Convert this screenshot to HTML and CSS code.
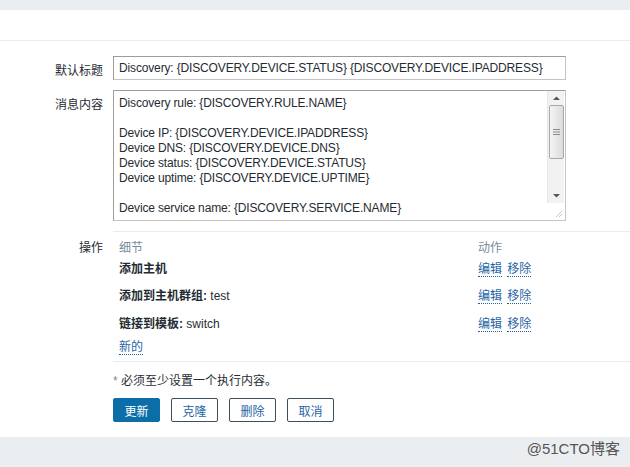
FILE: index.html
```html
<!DOCTYPE html>
<html lang="zh-CN">
<head>
    <meta charset="UTF-8">
    <title>Discovery 操作</title>
    <link rel="stylesheet" href="styles.css">
</head>
<body>

    <div class="topstrip"></div>

    <div class="panel">
        <div class="panel-head"></div>

        <form class="form">
            <div class="row">
                <label class="label" for="subject">默认标题</label>
                <div class="field">
                    <div class="input" id="subject">Discovery: {DISCOVERY.DEVICE.STATUS} {DISCOVERY.DEVICE.IPADDRESS}</div>
                </div>
            </div>

            <div class="row">
                <label class="label">消息内容</label>
                <div class="field">
                    <div class="textarea">
                        <div class="textarea-text">
                            <div>Discovery rule: {DISCOVERY.RULE.NAME}</div>
                            <div>&nbsp;</div>
                            <div>Device IP: {DISCOVERY.DEVICE.IPADDRESS}</div>
                            <div>Device DNS: {DISCOVERY.DEVICE.DNS}</div>
                            <div>Device status: {DISCOVERY.DEVICE.STATUS}</div>
                            <div>Device uptime: {DISCOVERY.DEVICE.UPTIME}</div>
                            <div>&nbsp;</div>
                            <div>Device service name: {DISCOVERY.SERVICE.NAME}</div>
                        </div>
                        <div class="scrollbar">
                            <svg class="arrow" width="9" height="6" viewBox="0 0 9 6"><path d="M1 5 L4.5 1.5 L8 5 Z" fill="#555"/></svg>
                            <div class="thumb">
                                <svg width="7" height="8" viewBox="0 0 7 8"><path d="M0 1.5 H7 M0 4 H7 M0 6.5 H7" stroke="#8a8a8a" stroke-width="1"/></svg>
                            </div>
                            <div class="track"></div>
                            <svg class="arrow" width="9" height="6" viewBox="0 0 9 6"><path d="M1 1 L4.5 4.5 L8 1 Z" fill="#555"/></svg>
                        </div>
                        <svg class="grip" width="8" height="8" viewBox="0 0 8 8"><path d="M7 1 L1 7 M7 4 L4 7" stroke="#c8c8c8" stroke-width="1"/></svg>
                    </div>
                </div>
            </div>

            <div class="row row-ops">
                <label class="label">操作</label>
                <div class="ops">
                    <div class="ops-row ops-head">
                        <span class="ops-detail">细节</span>
                        <span class="ops-action">动作</span>
                    </div>
                    <div class="ops-row">
                        <span class="ops-detail"><b>添加主机</b></span>
                        <span class="ops-action"><a class="link">编辑</a> <a class="link">移除</a></span>
                    </div>
                    <div class="ops-row">
                        <span class="ops-detail"><b>添加到主机群组:</b> test</span>
                        <span class="ops-action"><a class="link">编辑</a> <a class="link">移除</a></span>
                    </div>
                    <div class="ops-row">
                        <span class="ops-detail"><b>链接到模板:</b> switch</span>
                        <span class="ops-action"><a class="link">编辑</a> <a class="link">移除</a></span>
                    </div>
                    <div class="ops-new"><a class="link">新的</a></div>
                </div>
            </div>

            <div class="row">
                <span class="label"></span>
                <div class="note"><span class="star">*</span> 必须至少设置一个执行内容。</div>
            </div>

            <div class="row">
                <span class="label"></span>
                <div class="buttons">
                    <button type="button" class="btn btn-primary">更新</button>
                    <button type="button" class="btn">克隆</button>
                    <button type="button" class="btn">删除</button>
                    <button type="button" class="btn">取消</button>
                </div>
            </div>
        </form>
    </div>

    <div class="footer">@51CTO博客</div>

</body>
</html>
```

FILE: styles.css
```css
/* Global Styles */
body {
    margin: 0;
    padding: 0;
    background-color: #ebeef0;
    font-family: "Liberation Sans", Arial, "Noto Sans CJK SC", sans-serif;
    font-size: 12px;
    color: #1f2c33;
}

.topstrip {
    height: 10px;
}

.panel {
    background-color: #ffffff;
    height: 427px;
}

.panel-head {
    height: 30px;
    border-bottom: 1px solid #ebebeb;
}

/* Form Layout */
.form {
    padding-top: 15px;
}

.row {
    display: grid;
    grid-template-columns: 113px 1fr;
    margin-bottom: 10px;
}

.label {
    text-align: right;
    padding-right: 10px;
    padding-top: 5px;
    color: #1f2c33;
}

.field {
    width: 453px;
}

.input {
    height: 22px;
    line-height: 22px;
    border: 1px solid #a0a0a0;
    border-color: #9d9d9d #c4c4c4 #c4c4c4 #9d9d9d;
    padding: 0 5px;
    white-space: nowrap;
    overflow: hidden;
    letter-spacing: -0.15px;
}

/* Textarea */
.textarea {
    position: relative;
    height: 129px;
    border: 1px solid #c4c4c4;
    border-top-color: #9d9d9d;
    border-left-color: #9d9d9d;
    display: flex;
}

.textarea-text {
    flex: 1;
    padding: 5px 5px 4px;
    line-height: 15px;
    overflow: hidden;
    white-space: nowrap;
    letter-spacing: -0.15px;
}

.scrollbar {
    width: 16px;
    height: 112px;
    margin-right: 1px;
    background-color: #f2f2f2;
    border-left: 1px solid #e6e6e6;
    display: flex;
    flex-direction: column;
    align-items: center;
}

.arrow {
    margin: 4px 0;
}

.thumb {
    width: 13px;
    height: 52px;
    border: 1px solid #a8a8a8;
    border-radius: 2px;
    background: linear-gradient(90deg, #f4f4f4, #dcdcdc);
    display: flex;
    align-items: center;
    justify-content: center;
}

.track {
    flex: 1;
}

.grip {
    position: absolute;
    right: 2px;
    bottom: 2px;
}

/* Operations */
.row-ops {
    margin-top: 5px;
}

.row-ops .label {
    padding-top: 7px;
}

.ops {
    border-top: 1px solid #ebebeb;
    border-bottom: 1px solid #ebebeb;
    padding: 7px 0 5px 6px;
}

.ops-row {
    display: flex;
    height: 27px;
    line-height: 18px;
}

.ops-head {
    height: 21px;
    color: #768d99;
}

.ops-row + .ops-row + .ops-row {
    height: 28px;
}

.ops-detail {
    width: 359px;
}

.link {
    color: #1f65a6;
    text-decoration: none;
    border-bottom: 1px dotted #1f65a6;
}

.link + .link {
    margin-left: 2px;
}

.ops-new {
    line-height: 18px;
    margin-top: -5px;
}

.note {
    padding-top: 3px;
    margin-top: -4px;
}

.star {
    color: #888;
}

/* Buttons */
.buttons {
    display: flex;
    gap: 11px;
}

.btn {
    width: 47px;
    height: 24px;
    padding: 0;
    font-family: inherit;
    font-size: 12px;
    color: #1f65a6;
    background-color: #ffffff;
    border: 1px solid #3d4f5a;
    border-radius: 2px;
}

.btn-primary {
    color: #ffffff;
    background-color: #0c6ea7;
    border-color: #0c6ea7;
}

/* Footer watermark */
.footer {
    height: 30px;
    line-height: 24px;
    text-align: right;
    padding-right: 10px;
    font-size: 15px;
    color: #555555;
}
```
